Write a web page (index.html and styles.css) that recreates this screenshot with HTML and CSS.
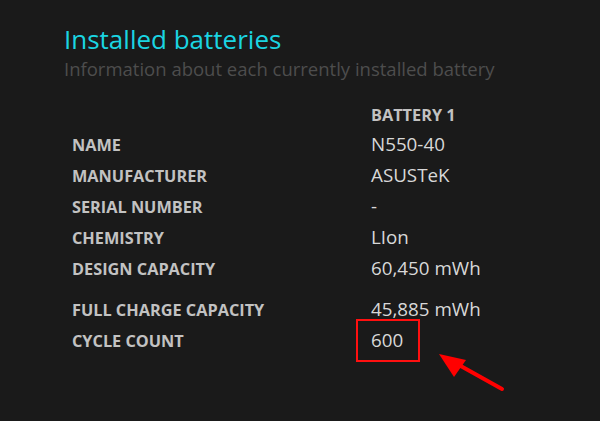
FILE: index.html
```html
<!DOCTYPE html>
<html lang="en">
<head>
<meta charset="utf-8">
<title>Installed batteries</title>
<link rel="stylesheet" href="styles.css">
</head>
<body>
<main class="page">
  <h1 class="title">Installed batteries</h1>
  <p class="subtitle">Information about each currently installed battery</p>
  <div class="table">
    <div class="row head"><span class="label"></span><span class="value col-head">BATTERY 1</span></div>
    <div class="row"><span class="label">NAME</span><span class="value">N550-40</span></div>
    <div class="row"><span class="label">MANUFACTURER</span><span class="value">ASUSTeK</span></div>
    <div class="row"><span class="label">SERIAL NUMBER</span><span class="value">-</span></div>
    <div class="row"><span class="label">CHEMISTRY</span><span class="value">LIon</span></div>
    <div class="row"><span class="label">DESIGN CAPACITY</span><span class="value">60,450 mWh</span></div>
    <div class="row spaced"><span class="label">FULL CHARGE CAPACITY</span><span class="value">45,885 mWh</span></div>
    <div class="row"><span class="label">CYCLE COUNT</span><span class="value highlighted">600</span></div>
  </div>
  <svg class="arrow" width="80" height="50" viewBox="0 0 80 50" aria-hidden="true">
    <line x1="72" y1="44" x2="20" y2="15" stroke="#ff0000" stroke-width="4" stroke-linecap="round"/>
    <polygon points="9,9 36,15 24,32" fill="#ff0000"/>
  </svg>
</main>
</body>
</html>
```
FILE: styles.css
```css
html, body {
  margin: 0;
  padding: 0;
  background: #1a1a1a;
}
body {
  width: 600px;
  height: 421px;
  overflow: hidden;
  font-family: "Open Sans", "Noto Sans", sans-serif;
}
.page {
  position: relative;
  padding: 22px 0 0 64px;
}
.title {
  margin: 0;
  font-size: 26px;
  font-weight: 400;
  line-height: 34px;
  color: #1ad5e2;
}
.subtitle {
  margin: 0;
  font-size: 18.5px;
  line-height: 26px;
  font-weight: 400;
  color: #4d4d4d;
}
.table {
  margin-top: 19px;
  padding-left: 8px;
}
.row {
  display: flex;
  align-items: baseline;
  height: 31px;
  line-height: 31px;
}
.row.head {
  height: 28px;
  line-height: 28px;
}
.row.spaced {
  margin-top: 10px;
}
.label {
  width: 299px;
  flex: none;
  font-size: 16.3px;
  font-weight: 700;
  color: #c2c2c2;
}
.value {
  position: relative;
  font-size: 18.8px;
  font-weight: 400;
  color: #d8d8d8;
}
.col-head {
  font-size: 16.3px;
  font-weight: 700;
  color: #c2c2c2;
}
.highlighted::before {
  content: "";
  position: absolute;
  left: -15px;
  top: -6px;
  width: 60px;
  height: 39px;
  border: 2px solid #ff1010;
}
.arrow {
  position: absolute;
  left: 430px;
  top: 345px;
}
```
